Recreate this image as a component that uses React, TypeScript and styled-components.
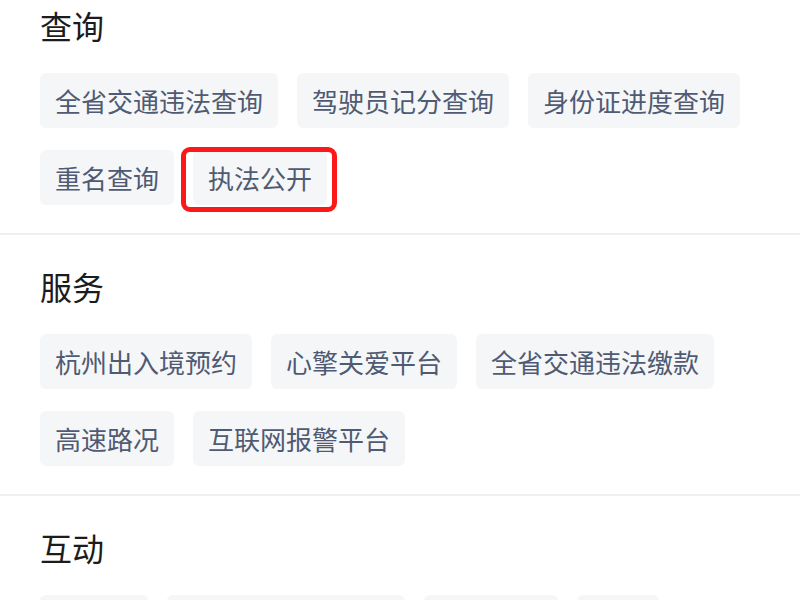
import React from 'react';
import styled, { createGlobalStyle } from 'styled-components';

const GlobalStyle = createGlobalStyle`
  html, body {
    margin: 0;
    padding: 0;
    background: #ffffff;
  }
  body {
    font-family: "Noto Sans CJK SC", "Noto Sans", sans-serif;
    overflow: hidden;
  }
`;

const Page = styled.div`
  width: 800px;
  height: 600px;
  overflow: hidden;
  background: #ffffff;
`;

const Section = styled.section<{ first?: boolean }>`
  padding: ${props => (props.first ? '9px' : '35px')} 0 28px 40px;
  border-bottom: 2px solid #efefef;
`;

const SectionTitle = styled.h2`
  margin: 0;
  font-size: 32px;
  line-height: 32px;
  font-weight: 400;
  color: #1c1c1c;
`;

const ChipList = styled.div`
  display: flex;
  flex-wrap: wrap;
  gap: 22px 19px;
  margin-top: 32px;
`;

const Chip = styled.div`
  position: relative;
  height: 55px;
  padding: 0 15px;
  display: flex;
  align-items: center;
  background: #f5f6f8;
  border-radius: 6px;
  font-size: 26px;
  color: #4f5a73;
  white-space: nowrap;
`;

const Highlight = styled.span`
  position: absolute;
  top: -3px;
  left: -12px;
  right: -10px;
  bottom: -7px;
  border: 5px solid #fb1818;
  border-radius: 9px;
  pointer-events: none;
`;

interface Group {
  title: string;
  items: string[];
}

const groups: Group[] = [
  {
    title: '查询',
    items: ['全省交通违法查询', '驾驶员记分查询', '身份证进度查询', '重名查询', '执法公开'],
  },
  {
    title: '服务',
    items: ['杭州出入境预约', '心擎关爱平台', '全省交通违法缴款', '高速路况', '互联网报警平台'],
  },
  {
    title: '互动',
    items: ['意见箱', '交通违法举报平台', '警民互动', '留言'],
  },
];

const App: React.FC = () => {
  return (
    <Page>
      <GlobalStyle />
      {groups.map((group, gi) => (
        <Section key={group.title} first={gi === 0}>
          <SectionTitle>{group.title}</SectionTitle>
          <ChipList>
            {group.items.map(item => (
              <Chip key={item}>
                {item}
                {item === '执法公开' && <Highlight />}
              </Chip>
            ))}
          </ChipList>
        </Section>
      ))}
    </Page>
  );
};

export default App;
